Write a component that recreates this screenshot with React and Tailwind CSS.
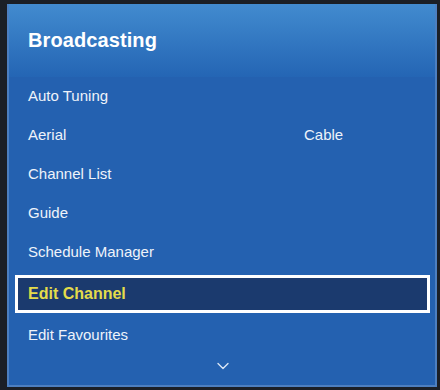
import { ChevronDown } from 'lucide-react';

const items = [
  { label: 'Auto Tuning' },
  { label: 'Aerial', value: 'Cable' },
  { label: 'Channel List' },
  { label: 'Guide' },
  { label: 'Schedule Manager' },
];

const MenuRow = ({ label, value }) => (
  <div className="h-[39px] flex items-center pl-[19px] text-[15px] text-[#eef3fa]">
    <span className="w-[276px]">{label}</span>
    {value && <span>{value}</span>}
  </div>
);

const App = () => {
  return (
    <div
      className="w-[440px] h-[390px] bg-[#1b1f26] pt-[4px] pl-[7px] pr-[3px] pb-[3px]"
      style={{ fontFamily: '"Liberation Sans", Arial, sans-serif' }}
    >
      <div className="h-full flex flex-col bg-[#2461b0] border-x-2 border-b-2 border-[#4d7fc0]">
        <div className="h-[73px] shrink-0 flex items-center pl-[19px] pb-[2px] bg-gradient-to-b from-[#428bcf] to-[#2465b4]">
          <span className="text-[20px] font-bold text-white tracking-[0.1px]">Broadcasting</span>
        </div>

        {items.map((item) => (
          <MenuRow key={item.label} {...item} />
        ))}

        <div className="h-[44px] flex items-center pl-[6px] pr-[5px]">
          <div className="w-full h-[38px] border-[3px] border-white bg-[#1b3a6e] flex items-center pl-[10px]">
            <span className="text-[16px] font-bold text-[#e4dc4a]">Edit Channel</span>
          </div>
        </div>

        <MenuRow label="Edit Favourites" />

        <div className="flex-1 flex items-start justify-center pl-[2px]">
          <ChevronDown className="w-[20px] h-[20px] text-[#dce7f5] mt-[1px]" strokeWidth={1.6} />
        </div>
      </div>
    </div>
  );
};

export default App;
